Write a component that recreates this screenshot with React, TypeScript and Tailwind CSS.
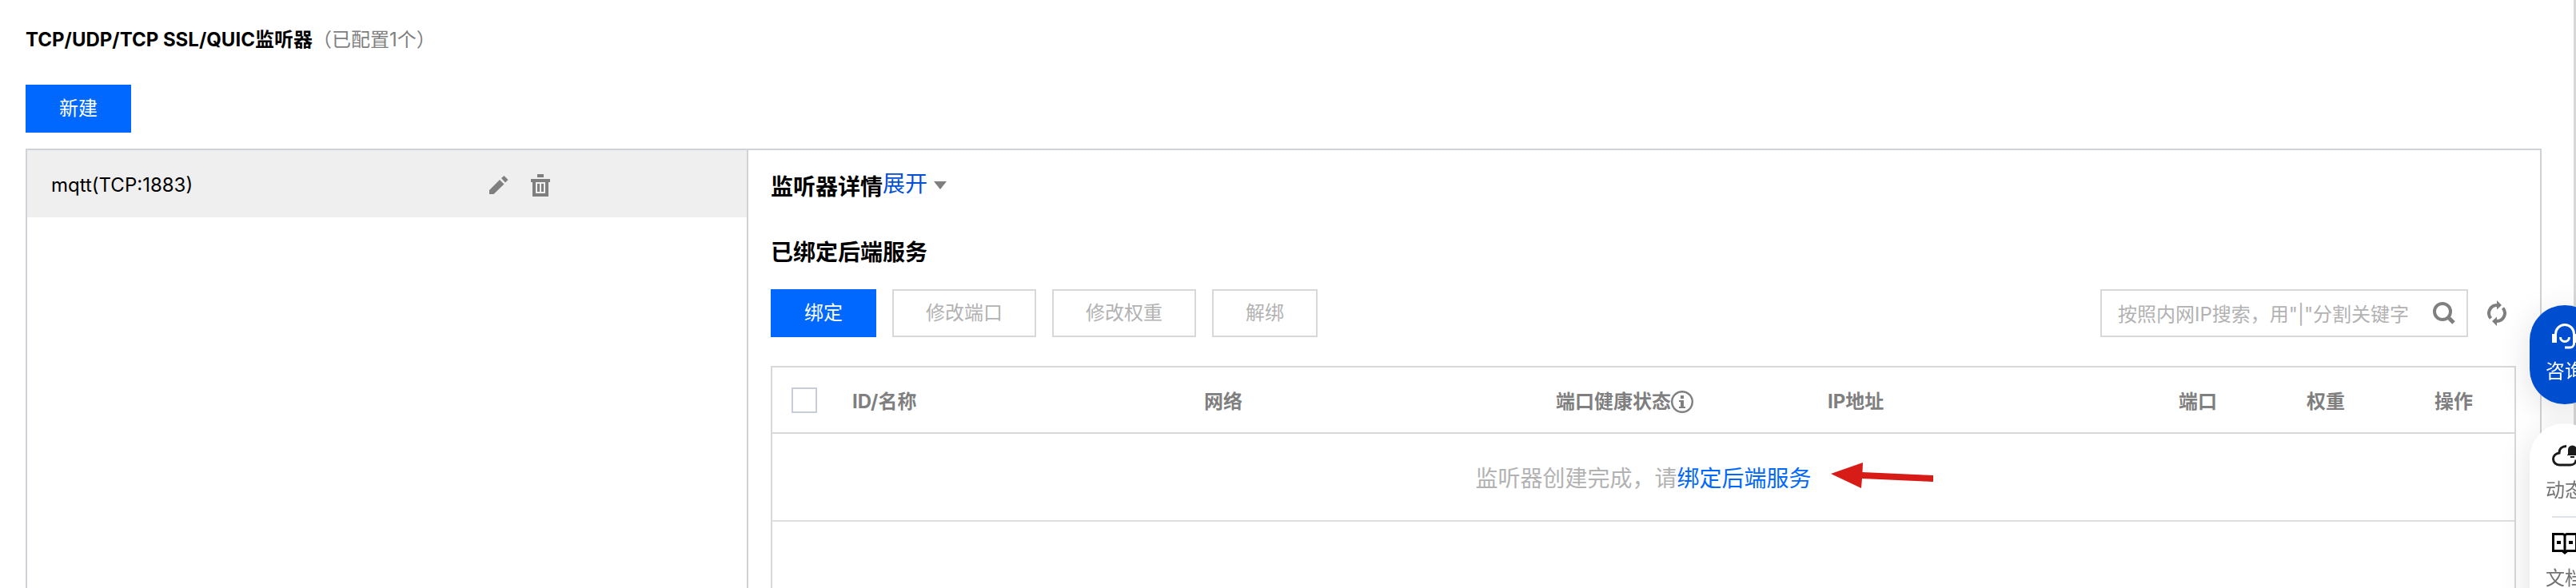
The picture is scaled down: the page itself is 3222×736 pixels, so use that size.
const columns = [
  { label: 'ID/名称', width: 'w-[440px]' },
  { label: '网络', width: 'w-[440px]' },
  { label: '端口健康状态', width: 'w-[340px]', hint: true },
  { label: 'IP地址', width: 'w-[439px]' },
  { label: '端口', width: 'w-[160px]' },
  { label: '权重', width: 'w-[160px]' },
  { label: '操作', width: '' },
];

const actions = ['修改端口', '修改权重', '解绑'];

function PencilIcon() {
  return (
    <svg className="h-6 w-6" viewBox="0 0 24 24" fill="#7f7f7f">
      <path d="M0 18 13 5l5.500 5.500L5.500 23H0zM15 3l3.500-3L23.500 5l-3.500 3.500z" />
    </svg>
  );
}

function TrashIcon() {
  return (
    <svg className="h-7 w-6" viewBox="0 0 24 28" fill="#7f7f7f">
      <path d="M8 0h8v4H8zM0 6h24v4h-2v18H2V10H0zm6 4v14h12V10z" fillRule="evenodd" />
      <path d="M8 12h3v10H8zM13 12h3v10h-3z" />
    </svg>
  );
}

function SearchIcon() {
  return (
    <svg className="h-7 w-7" viewBox="0 0 28 28" fill="none" stroke="#7f7f7f" strokeWidth="4">
      <circle cx="12" cy="12" r="10" />
      <path d="m19 19 7 7" strokeWidth="5" />
    </svg>
  );
}

function RefreshIcon() {
  return (
    <svg className="h-8 w-6" viewBox="0 0 24 32" fill="none" stroke="#7f7f7f" strokeWidth="4">
      <path d="M4.500 22.500A10 10 0 0 1 12 6M19.500 9.500A10 10 0 0 1 12 26" />
      <path d="M12 0v11.500l6-5.500zM12 32V20.500l-6 5.500z" fill="#7f7f7f" stroke="none" />
    </svg>
  );
}

function InfoIcon() {
  return (
    <svg className="h-7 w-7" viewBox="0 0 28 28" fill="none" stroke="#7f7f7f">
      <circle cx="14" cy="14" r="12.800" strokeWidth="2.400" />
      <path d="M12 6h4v4h-4zM10 12h6v8h2v2h-8v-2h2v-6h-2z" fill="#7f7f7f" stroke="none" />
    </svg>
  );
}

function HeadsetIcon() {
  return (
    <svg className="h-8 w-8" viewBox="0 0 32 32" fill="none" stroke="#fff" strokeWidth="3">
      <path d="M4.500 14v-1a11.500 11.500 0 0 1 23 0v12a5 5 0 0 1-5 5H16" />
      <path d="M0 13h6v11H0zM26 13h6v11h-6z" fill="#fff" stroke="none" />
      <path d="M10.500 17a5.500 5.500 0 0 0 11 0" />
    </svg>
  );
}

function CloudBellIcon() {
  return (
    <svg className="h-8 w-8" viewBox="0 0 32 32" fill="none" stroke="#1a1a1a" strokeWidth="3">
      <path d="M18 4.500c-5 0-9 3-9 8.500-4 .5-7.500 3-7.500 7.500S5 28 9 28h14c4 0 7-2.500 7-6.500" />
      <path d="M20 15V9a5.500 5.500 0 0 1 11 0v6h1v1H19v-1zM23 17h5v2h-5z" fill="#1a1a1a" stroke="none" />
    </svg>
  );
}

function BookIcon() {
  return (
    <svg className="h-8 w-8" viewBox="0 0 32 32" fill="none" stroke="#000" strokeWidth="3">
      <path d="M16 7c0-1.500-1.500-2.500-3-2.500H1.500v21H13l3 2.500 3-2.500h11.500v-21H19c-1.500 0-3 1-3 2.500zM16 7v20" />
      <path d="M6 13h5v4H6zM21 13h5v4h-5z" fill="#000" stroke="none" />
    </svg>
  );
}

function ListenerList() {
  return (
    <aside className="w-[902px] shrink-0 border-r-2 border-[#cfd3d8]">
      <div className="flex h-21 items-center bg-[#efefef] pt-1 pl-[30px]">
        <span className="w-[548px]">mqtt(TCP:1883)</span>
        <button aria-label="编辑" className="mr-7">
          <PencilIcon />
        </button>
        <button aria-label="删除">
          <TrashIcon />
        </button>
      </div>
    </aside>
  );
}

function BackendTable() {
  return (
    <div className="mt-9 flex-1 border-2 border-b-0 border-[#d8d8d8]">
      <table className="w-full table-fixed border-collapse text-left">
        <thead>
          <tr className="h-[82px] border-b-2 border-[#d8d8d8] text-[#7f7f7f]">
            <th className="w-[100px] pl-6">
              <input
                type="checkbox"
                aria-label="全选"
                className="block h-8 w-8 appearance-none border-2 border-[#c9cddb] bg-white"
              />
            </th>
            {columns.map((col) => (
              <th key={col.label} className={`${col.width} pt-1 font-bold`}>
                {col.hint ? (
                  <span className="flex items-center">
                    {col.label}
                    <InfoIcon />
                  </span>
                ) : (
                  col.label
                )}
              </th>
            ))}
          </tr>
        </thead>
        <tbody>
          <tr className="h-[110px] border-b-2 border-[#e0e0e0]">
            <td colSpan={8} className="pt-1 text-[28px] leading-10 text-[#b2b2b2]">
              <div className="relative mx-auto w-fit">
                监听器创建完成，请
                <a href="#bind" className="text-[#0067ff]">
                  绑定后端服务
                </a>
                <svg className="absolute top-0 left-full ml-6 h-8 w-32" viewBox="0 0 128 32" fill="#d71b17">
                  <path d="M0 14 40 0l-.5 12L128 16v8l-89-4-1 12z" />
                </svg>
              </div>
            </td>
          </tr>
        </tbody>
      </table>
    </div>
  );
}

function ListenerDetail() {
  return (
    <main className="flex min-w-0 flex-1 flex-col pr-[30px] pl-7">
      <div className="flex items-start pt-[22px] text-[28px] leading-10">
        <h2 className="pt-1 font-bold">监听器详情</h2>
        <button className="flex items-center text-[#004fd6]">
          展开
          <svg className="mt-1 ml-2 h-[10px] w-4" viewBox="0 0 16 10" fill="#7f7f7f">
            <path d="M0 0h16L8 10z" />
          </svg>
        </button>
      </div>
      <h2 className="mt-[42px] text-[28px] leading-10 font-bold">已绑定后端服务</h2>

      <div className="mt-[26px] flex items-center gap-5">
        <button className="h-15 bg-[#0067ff] px-[42px] text-white">绑定</button>
        {actions.map((action) => (
          <button key={action} disabled className="h-15 border-2 border-[#d8d8d8] px-10 text-[#b2b2b2]">
            {action}
          </button>
        ))}
        <div className="ml-auto flex h-15 w-[460px] items-center border-2 border-[#d8d8d8] pr-[14px] pl-5">
          <input
            type="text"
            aria-label="搜索"
            placeholder={'按照内网IP搜索，用"|"分割关键字'}
            className="min-w-0 flex-1 pt-1 outline-none placeholder:text-[#b2b2b2]"
          />
          <button aria-label="查询" className="ml-3">
            <SearchIcon />
          </button>
        </div>
        <button aria-label="刷新" className="mr-3 ml-1">
          <RefreshIcon />
        </button>
      </div>

      <BackendTable />
    </main>
  );
}

function SideDock() {
  return (
    <div className="fixed top-[382px] -right-[30px] flex w-22 flex-col gap-6 text-[#737373]">
      <button className="flex h-31 flex-col items-center rounded-full bg-[#004ed0] pt-[23px] text-white shadow-[0_8px_40px_rgba(0,0,0,0.12)]">
        <HeadsetIcon />
        <span className="mt-2 leading-10">咨询</span>
      </button>
      <div className="flex h-[400px] flex-col items-center rounded-[44px] bg-white pt-6 shadow-[0_8px_40px_rgba(0,0,0,0.12)]">
        <button className="flex flex-col items-center">
          <CloudBellIcon />
          <span className="mt-2 leading-10">动态</span>
        </button>
        <hr className="mt-3 mb-4 w-8 border-t-2 border-[#dfe3e8]" />
        <button className="flex flex-col items-center">
          <BookIcon />
          <span className="mt-2 leading-10">文档</span>
        </button>
      </div>
    </div>
  );
}

export default function App() {
  return (
    <div className="flex h-screen flex-col overflow-hidden border-r-[3px] border-[#d8d8d8] bg-white pr-10 pl-8 font-[Inter,'Noto_Sans_CJK_SC',sans-serif] text-2xl text-black">
      <h1 className="mt-[30px] leading-10 font-bold">
        TCP/UDP/TCP SSL/QUIC监听器
        <span className="font-normal text-[#7f7f7f]">（已配置1个）</span>
      </h1>
      <div className="mt-9">
        <button className="h-15 bg-[#0067ff] px-[42px] text-white">新建</button>
      </div>
      <section className="mt-5 flex flex-1 border-2 border-b-0 border-[#cfd3d8]">
        <ListenerList />
        <ListenerDetail />
      </section>
      <SideDock />
    </div>
  );
}
